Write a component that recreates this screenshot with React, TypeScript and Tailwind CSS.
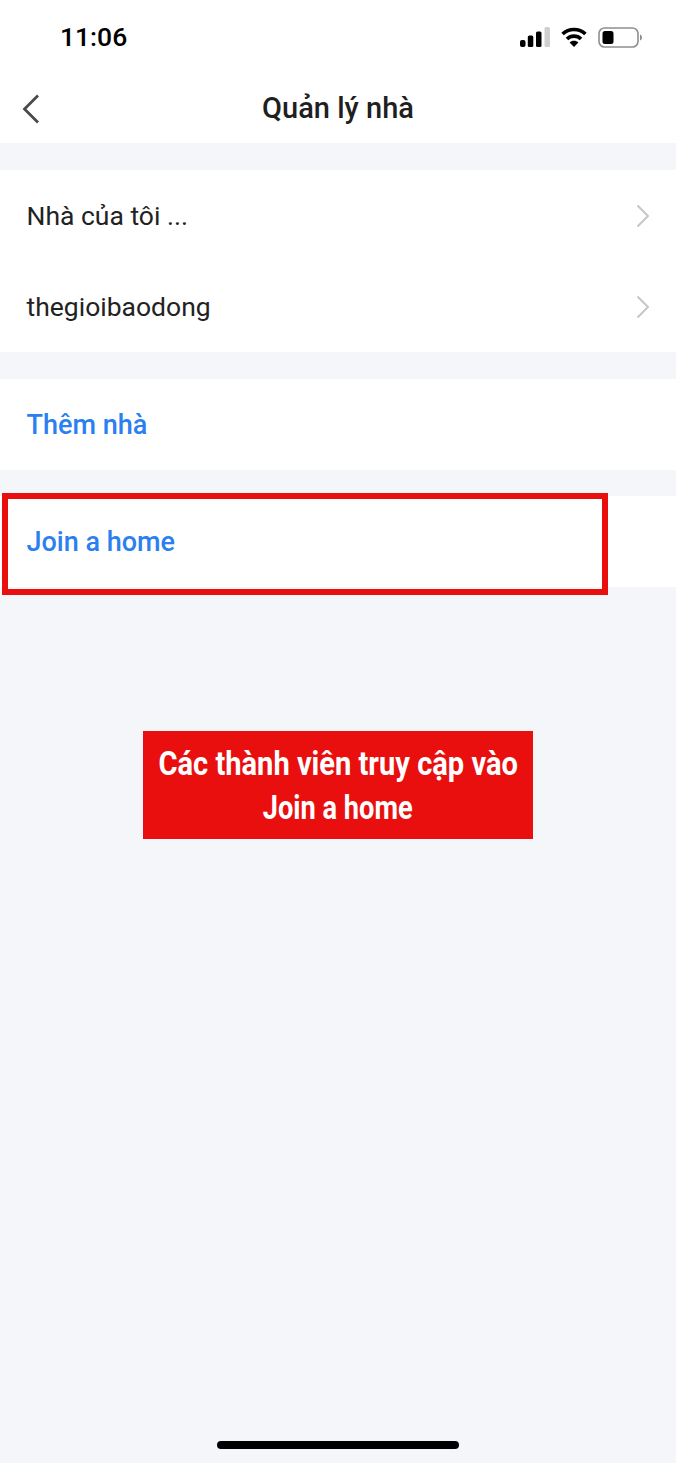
const homes = ['Nhà của tôi ...', 'thegioibaodong'];

function SignalIcon() {
  return (
    <svg width="30" height="20" viewBox="0 0 30 20">
      <rect x="0" y="13" width="5.5" height="7" rx="2" fill="#000" />
      <rect x="7.8" y="8.5" width="5.5" height="11.5" rx="1.5" fill="#000" />
      <rect x="16" y="4.5" width="5.5" height="15.5" rx="1.5" fill="#000" />
      <rect x="24.5" y="0" width="5.5" height="20" rx="1.5" fill="#cfcfcf" />
    </svg>
  );
}

function WifiIcon() {
  return (
    <svg width="26" height="20" viewBox="0 0 26 20" fill="none" stroke="#000" strokeWidth="3.6">
      <path d="M1.6 7C7.8 .9 18.2 .9 24.4 7" />
      <path d="M6 12C9.8 8.2 16.2 8.2 20 12" />
      <path d="M13 20l-4.4-4.6c2.2-2.1 6.6-2.1 8.8 0z" fill="#000" stroke="none" />
    </svg>
  );
}

function BatteryIcon() {
  return (
    <svg width="44" height="21" viewBox="0 0 44 21" fill="none">
      <rect x="1" y="1" width="39" height="19" rx="5.5" stroke="#8f8f8f" strokeWidth="1.6" />
      <rect x="4.5" y="4" width="11" height="13" rx="2.5" fill="#000" />
      <path d="M42 7.5c1.4.5 2 1.6 2 3s-.6 2.5-2 3z" fill="#8f8f8f" />
    </svg>
  );
}

function Chevron({ left }: { left?: boolean }) {
  if (left) {
    return (
      <svg width="18" height="30" viewBox="0 0 18 30" fill="none" stroke="#4a4a4a" strokeWidth="2.8" className="absolute left-[22px]">
        <path d="M16 1.5L2.5 15 16 28.5" />
      </svg>
    );
  }
  return (
    <svg width="14" height="24" viewBox="0 0 14 24" fill="none" stroke="#c6c6c6" strokeWidth="2">
      <path d="M1.5 1.5L12 12 1.5 22.5" />
    </svg>
  );
}

function Row({ label, blue, chevron }: { label: string; blue?: boolean; chevron?: boolean }) {
  return (
    <div className="flex h-[91px] items-center justify-between bg-white pr-[26px] pl-[26.5px]">
      <span className={blue ? 'pt-[1px] text-[27px] font-medium text-[#2b7ff0]' : 'text-[26.5px] text-[#222222]'}>
        {label}
      </span>
      {chevron && <Chevron />}
    </div>
  );
}

export default function App() {
  return (
    <div className="relative flex min-h-[1463px] flex-col bg-[#f5f6fa] font-['Roboto',sans-serif]">
      <header className="h-[143px] bg-white">
        <div className="flex h-[74px] items-center justify-between pr-[34px] pl-[60px]">
          <span className="text-[26.5px] font-medium text-black">11:06</span>
          <div className="flex items-center gap-[11px]">
            <SignalIcon />
            <WifiIcon />
            <BatteryIcon />
          </div>
        </div>
        <div className="relative flex h-[69px] items-center justify-center">
          <Chevron left />
          <h1 className="text-[29px] font-medium text-[#1f1f1f]">Quản lý nhà</h1>
        </div>
      </header>

      <section className="mt-[27px]">
        {homes.map((home) => (
          <Row key={home} label={home} chevron />
        ))}
      </section>
      <section className="mt-[27px]">
        <Row label="Thêm nhà" blue />
      </section>
      <section className="mt-[26px]">
        <Row label="Join a home" blue />
      </section>

      <div className="absolute top-[493px] left-[2px] h-[102px] w-[606px] border-[6px] border-[#e90f0f]" />

      <div className="mx-auto mt-[144px] flex h-[108px] w-[390px] flex-col items-center justify-center bg-[#e90f0f] text-[34px] leading-[44px] font-bold text-white">
        <span className="scale-x-[0.855] whitespace-nowrap">Các thành viên truy cập vào</span>
        <span className="scale-x-[0.8] whitespace-nowrap">Join a home</span>
      </div>

      <div className="absolute top-[1441px] left-[217px] h-[8px] w-[242px] rounded-full bg-black" />
    </div>
  );
}
